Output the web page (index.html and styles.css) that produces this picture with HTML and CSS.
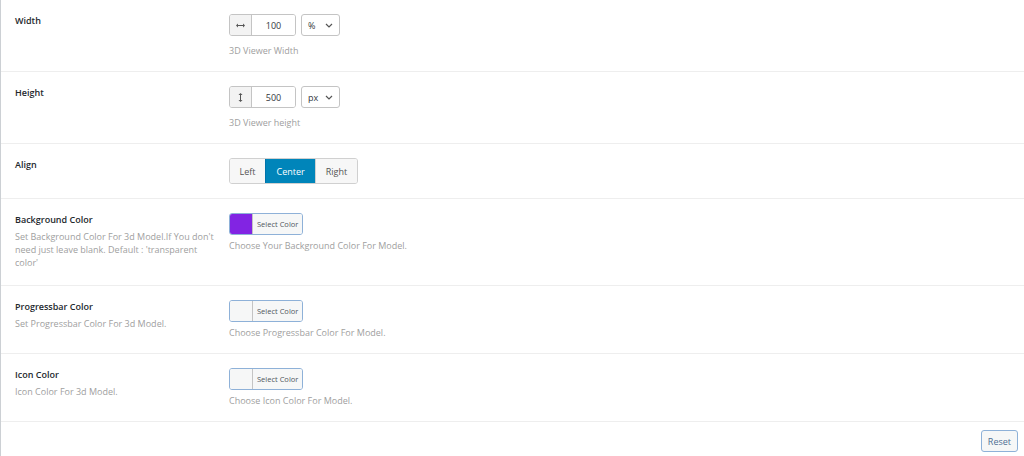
FILE: index.html
```html
<!DOCTYPE html>
<html lang="en">
<head>
    <meta charset="UTF-8">
    <meta name="viewport" content="width=device-width, initial-scale=1.0">
    <title>3D Viewer Settings</title>
    <link rel="stylesheet" href="styles.css">
</head>
<body>
    <div class="settings-panel">
        <div class="field">
            <div class="field-title">
                <h4>Width</h4>
            </div>
            <div class="fieldset">
                <div class="dimension">
                    <div class="input-group">
                        <span class="addon">
                            <svg width="9" height="5" viewBox="0 0 9 5"><path d="M0 2.5 L2 0.5 V2 H7 V0.5 L9 2.5 L7 4.5 V3 H2 V4.5 Z" fill="#555"/></svg>
                        </span>
                        <input type="text" class="number" value="100">
                    </div>
                    <div class="unit-select">
                        <span>%</span>
                        <svg width="8" height="5" viewBox="0 0 8 5"><path d="M1 1 L4 4 L7 1" fill="none" stroke="#555" stroke-width="1.2"/></svg>
                    </div>
                </div>
                <p class="help">3D Viewer Width</p>
            </div>
        </div>

        <div class="field">
            <div class="field-title">
                <h4>Height</h4>
            </div>
            <div class="fieldset">
                <div class="dimension">
                    <div class="input-group">
                        <span class="addon">
                            <svg width="5" height="9" viewBox="0 0 5 9"><path d="M2.5 0 L4.5 2 H3 V7 H4.5 L2.5 9 L0.5 7 H2 V2 H0.5 Z" fill="#555"/></svg>
                        </span>
                        <input type="text" class="number" value="500">
                    </div>
                    <div class="unit-select">
                        <span>px</span>
                        <svg width="8" height="5" viewBox="0 0 8 5"><path d="M1 1 L4 4 L7 1" fill="none" stroke="#555" stroke-width="1.2"/></svg>
                    </div>
                </div>
                <p class="help">3D Viewer height</p>
            </div>
        </div>

        <div class="field">
            <div class="field-title">
                <h4>Align</h4>
            </div>
            <div class="fieldset">
                <div class="button-set">
                    <button type="button">Left</button>
                    <button type="button" class="active">Center</button>
                    <button type="button">Right</button>
                </div>
            </div>
        </div>

        <div class="field">
            <div class="field-title">
                <h4>Background Color</h4>
                <p class="subtitle">Set Background Color For 3d Model.If You don't need just leave blank. Default : 'transparent color'</p>
            </div>
            <div class="fieldset">
                <div class="color-picker">
                    <span class="swatch purple"></span>
                    <span class="picker-text">Select Color</span>
                </div>
                <p class="help help-color">Choose Your Background Color For Model.</p>
            </div>
        </div>

        <div class="field">
            <div class="field-title">
                <h4>Progressbar Color</h4>
                <p class="subtitle">Set Progressbar Color For 3d Model.</p>
            </div>
            <div class="fieldset">
                <div class="color-picker">
                    <span class="swatch"></span>
                    <span class="picker-text">Select Color</span>
                </div>
                <p class="help help-color">Choose Progressbar Color For Model.</p>
            </div>
        </div>

        <div class="field">
            <div class="field-title">
                <h4>Icon Color</h4>
                <p class="subtitle">Icon Color For 3d Model.</p>
            </div>
            <div class="fieldset">
                <div class="color-picker">
                    <span class="swatch"></span>
                    <span class="picker-text">Select Color</span>
                </div>
                <p class="help help-color">Choose Icon Color For Model.</p>
            </div>
        </div>

        <div class="footer">
            <button type="button" class="reset">Reset</button>
        </div>
    </div>
</body>
</html>
```

FILE: styles.css
```css
body {
    margin: 0;
    background-color: #fff;
    font-family: "Open Sans", "Noto Sans", sans-serif;
    font-size: 9px;
    color: #23282d;
}
.settings-panel {
    border-left: 1px solid #ccd0d4;
    min-height: 456px;
    box-sizing: border-box;
}
.field {
    display: flex;
    padding: 14px 0 14px 14px;
    border-bottom: 1px solid #eee;
}
.field-title {
    width: 203px;
    flex-shrink: 0;
}
.field-title h4 {
    margin: 0;
    font-size: 9px;
    font-weight: 600;
    line-height: 13px;
    color: #23282d;
}
.subtitle {
    margin: 4px 0 0;
    padding-bottom: 2px;
    line-height: 13px;
    color: #a0a0a0;
}
.fieldset {
    padding-left: 11px;
}
.dimension {
    display: flex;
}
.input-group {
    display: flex;
    height: 22px;
    border: 1px solid #c4c4c4;
    border-radius: 3px;
    box-sizing: border-box;
    overflow: hidden;
}
.addon {
    width: 21px;
    display: flex;
    align-items: center;
    justify-content: center;
    background-color: #f3f3f3;
    border-right: 1px solid #c4c4c4;
}
.number {
    width: 43px;
    border: none;
    padding: 0;
    margin: 0;
    text-align: center;
    font-family: inherit;
    font-size: 9px;
    color: #32373c;
    outline: none;
}
.unit-select {
    width: 39px;
    height: 22px;
    margin-left: 5px;
    box-sizing: border-box;
    border: 1px solid #c4c4c4;
    border-radius: 3px;
    display: flex;
    align-items: center;
    justify-content: space-between;
    padding: 0 6px 0 6px;
    color: #32373c;
}
.help {
    margin: 8px 0 0;
    line-height: 13px;
    color: #a0a0a0;
}
.help-color {
    margin-top: 4px;
}
.button-set {
    display: flex;
    border: 1px solid #d0d0d0;
    border-radius: 3px;
    overflow: hidden;
    height: 26px;
    box-sizing: border-box;
}
.button-set button {
    font-family: inherit;
    font-size: 9px;
    color: #555;
    background-color: #f7f7f7;
    border: none;
    border-left: 1px solid #d0d0d0;
    padding: 0 9.5px;
    margin: 0;
}
.button-set button:first-child {
    border-left: none;
}
.button-set button.active {
    background-color: #0085ba;
    color: #fff;
    border-left-color: #0073aa;
    padding: 0 10.5px;
}
.color-picker {
    display: flex;
    width: fit-content;
    height: 22px;
    border: 1px solid #8eb1d8;
    border-radius: 3px;
    box-sizing: border-box;
    overflow: hidden;
}
.swatch {
    width: 22px;
    background-color: #f6f7f7;
    border-right: 1px solid #c4c4c4;
}
.swatch.purple {
    background-color: #8224e3;
}
.picker-text {
    display: flex;
    align-items: center;
    padding: 0 4px;
    background-color: #f6f7f7;
    font-size: 7.5px;
    color: #50575e;
}
.footer {
    display: flex;
    justify-content: flex-end;
    padding: 8px 6px 4px 0;
}
.reset {
    height: 22px;
    padding: 0 6px;
    font-family: inherit;
    font-size: 9px;
    color: #4f6f93;
    background-color: #f6f7f7;
    border: 1px solid #8eb1d8;
    border-radius: 3px;
}
```
